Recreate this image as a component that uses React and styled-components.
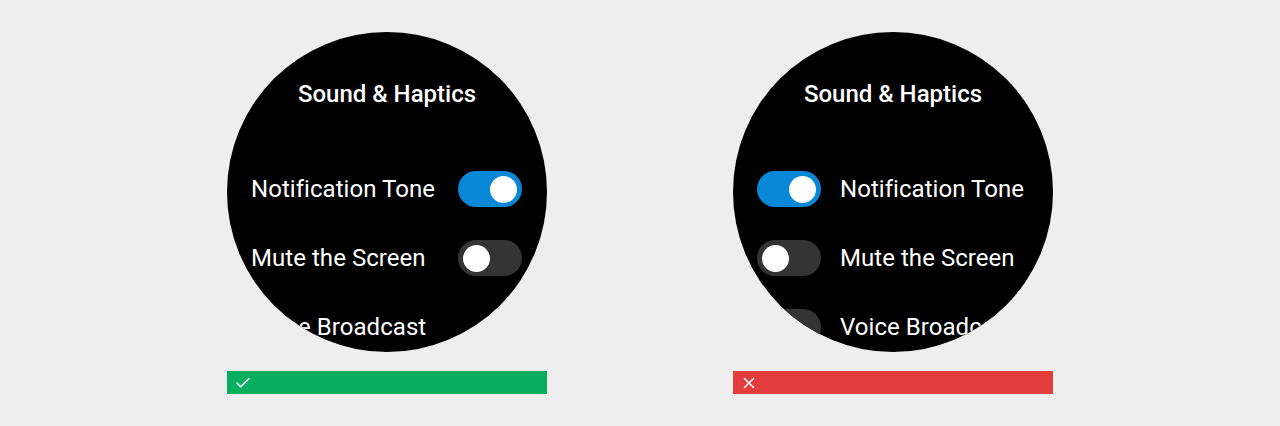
import React from "react";
import styled, { createGlobalStyle } from "styled-components";
import { Check, X } from "lucide-react";

const Global = createGlobalStyle`
  html, body { margin: 0; padding: 0; background: #eeeeee; }
  body { font-family: Roboto, "Noto Sans", sans-serif; }
`;

const Page = styled.div`
  display: flex;
  justify-content: center;
  gap: 186px;
  padding-top: 32px;
`;

const Column = styled.div`
  display: flex;
  flex-direction: column;
  width: 320px;
  gap: 19px;
`;

const Watch = styled.div`
  width: 320px;
  height: 320px;
  border-radius: 50%;
  background: #000;
  overflow: hidden;
  display: flex;
  flex-direction: column;
  color: #fff;
`;

const Title = styled.div`
  margin-top: 48px;
  text-align: center;
  font-size: 24px;
  font-weight: 500;
  line-height: 28px;
  white-space: nowrap;
`;

const List = styled.div`
  margin-top: 63px;
  display: flex;
  flex-direction: column;
  gap: 33px;
`;

const Row = styled.div`
  display: flex;
  align-items: center;
  height: 36px;
  justify-content: ${(p) => (p.$toggleFirst ? "flex-start" : "space-between")};
  gap: ${(p) => (p.$toggleFirst ? "19px" : "0")};
  padding: ${(p) => (p.$toggleFirst ? "0 24px" : "0 25px 0 24px")};
`;

const Label = styled.span`
  font-size: 24px;
  line-height: 28px;
  letter-spacing: 0.05px;
  white-space: nowrap;
`;

const Track = styled.div`
  flex: none;
  width: 64px;
  height: 36px;
  border-radius: 18px;
  background: ${(p) => (p.$on ? "#0a88d8" : "#343434")};
  display: flex;
  align-items: center;
  justify-content: ${(p) => (p.$on ? "flex-end" : "flex-start")};
  padding: 0 5px;
  box-sizing: border-box;
`;

const Knob = styled.div`
  width: 27px;
  height: 27px;
  border-radius: 50%;
  background: #fff;
`;

const Bar = styled.div`
  height: 23px;
  display: flex;
  align-items: center;
  padding-left: 7px;
  background: ${(p) => (p.$ok ? "#06ae5e" : "#e33c3c")};
  color: #fff;
`;

const Toggle = ({ on }) => (
  <Track $on={on}>
    <Knob />
  </Track>
);

const items = [
  { label: "Notification Tone", on: true },
  { label: "Mute the Screen", on: false },
  { label: "Voice Broadcast", on: false },
];

const WatchScreen = ({ toggleFirst }) => (
  <Watch>
    <Title>Sound &amp; Haptics</Title>
    <List>
      {items.map((it, i) => (
        <Row key={it.label} $toggleFirst={toggleFirst}>
          {toggleFirst ? (
            <>
              <Toggle on={it.on} />
              <Label>{it.label}</Label>
            </>
          ) : (
            <>
              <Label>{it.label}</Label>
              {i < 2 && <Toggle on={it.on} />}
            </>
          )}
        </Row>
      ))}
    </List>
  </Watch>
);

export default function App() {
  return (
    <>
      <Global />
      <Page>
        <Column>
          <WatchScreen toggleFirst={false} />
          <Bar $ok>
            <Check size={18} strokeWidth={2} />
          </Bar>
        </Column>
        <Column>
          <WatchScreen toggleFirst />
          <Bar>
            <X size={18} strokeWidth={2} />
          </Bar>
        </Column>
      </Page>
    </>
  );
}
